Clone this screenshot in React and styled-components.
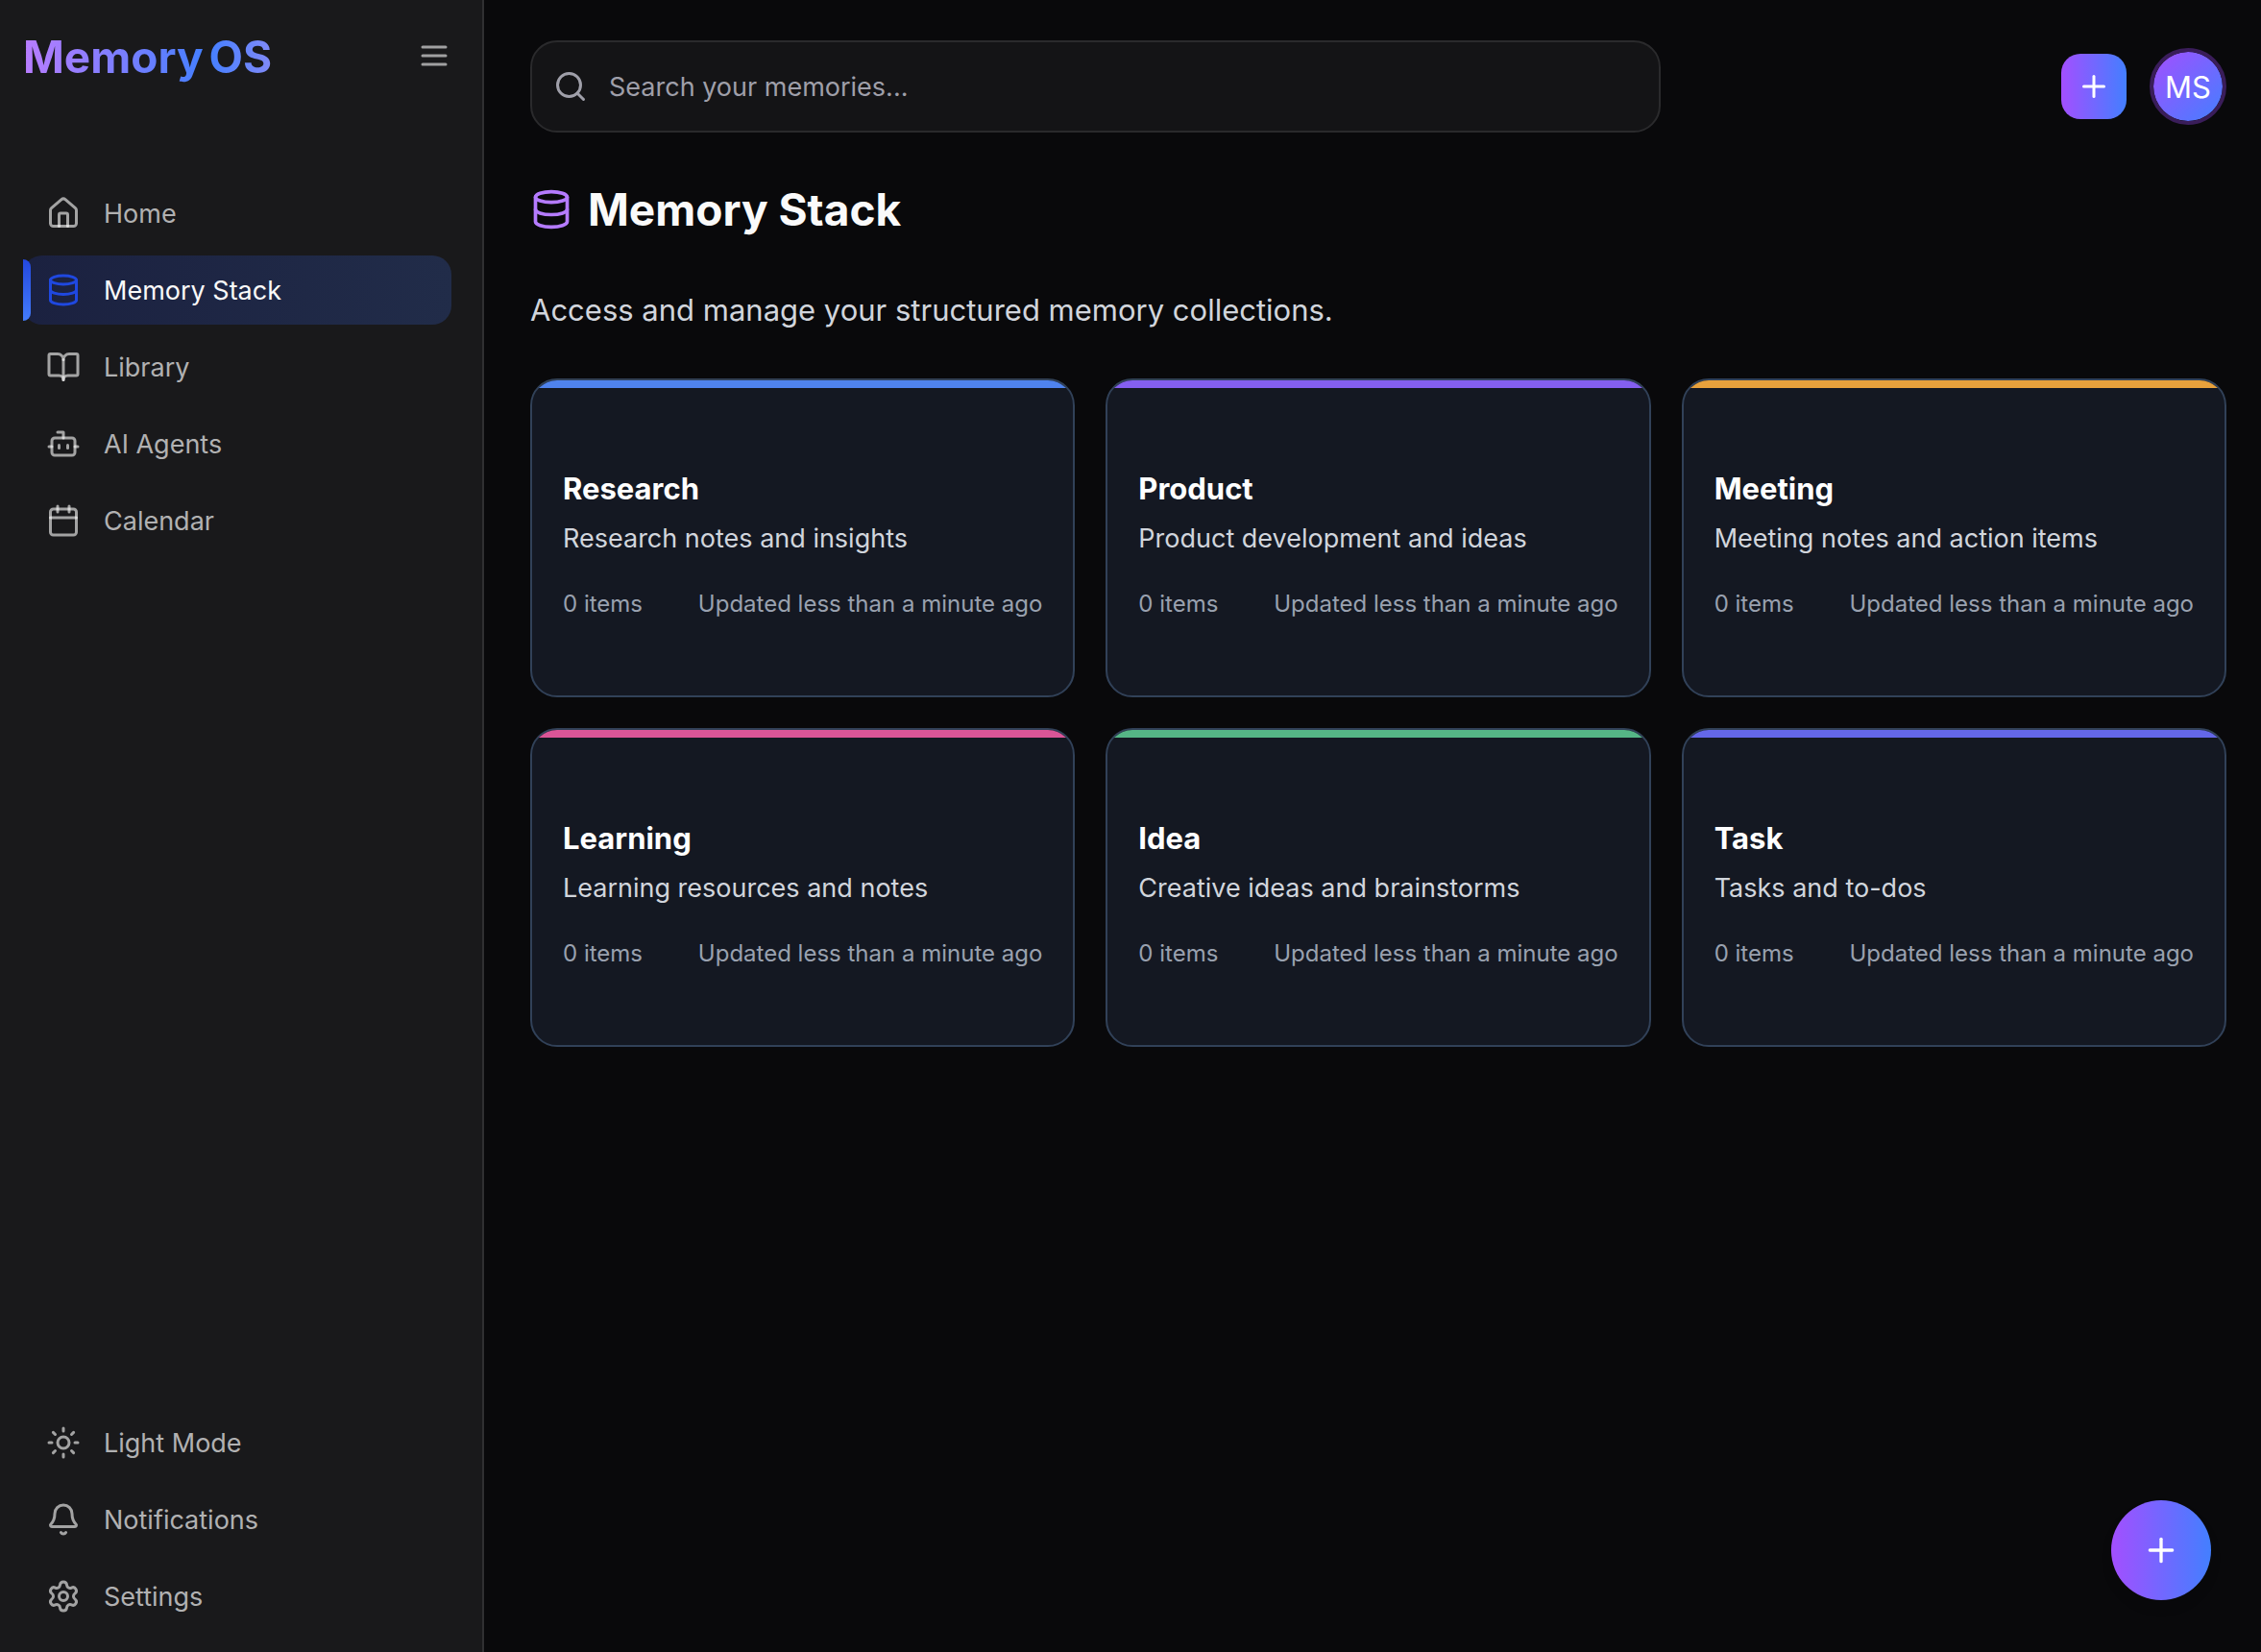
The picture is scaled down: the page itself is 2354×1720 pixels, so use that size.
import React from "react";
import styled, { createGlobalStyle, css } from "styled-components";
import {
  House,
  Database,
  BookOpen,
  Bot,
  Calendar,
  Sun,
  Bell,
  Settings,
  Search,
  Plus,
} from "lucide-react";

const GlobalStyle = createGlobalStyle`
  *, *::before, *::after { box-sizing: border-box; }
  body {
    margin: 0;
    background: #09090b;
    color: #fafafa;
    font-family: Inter, "Noto Sans", "Liberation Sans", sans-serif;
    font-size: 28px;
    -webkit-font-smoothing: antialiased;
  }
  h1, h2, p, ul { margin: 0; padding: 0; }
  button, input { font: inherit; }
`;

const Shell = styled.div`
  display: flex;
  min-height: 100vh;
`;

const Sidebar = styled.aside`
  position: sticky;
  top: 0;
  flex: 0 0 504px;
  height: 100vh;
  display: flex;
  flex-direction: column;
  background: #19191b;
  border-right: 2px solid #303032;
`;

const Brand = styled.div`
  display: flex;
  align-items: center;
  justify-content: space-between;
  height: 116px;
  padding: 0 32px 0 24px;
  margin-bottom: 70px;
`;

const Logo = styled.a`
  display: flex;
  gap: 6px;
  padding-top: 2px;
  font-size: 46px;
  line-height: 64px;
  font-weight: 700;
  text-decoration: none;
`;

const LogoWord = styled.span`
  color: transparent;
  background: linear-gradient(to right, ${(p) => p.$from}, ${(p) => p.$to});
  -webkit-background-clip: text;
  background-clip: text;
`;

const PlainButton = styled.button`
  display: flex;
  align-items: center;
  justify-content: center;
  padding: 0;
  border: 0;
  background: none;
  color: #fff;
  cursor: pointer;
`;

const MenuButton = styled(PlainButton)`
  width: 36px;
  height: 36px;
  color: #a0a0a1;
`;

const NavList = styled.ul`
  list-style: none;
  display: flex;
  flex-direction: column;
  gap: 8px;
  padding: 0 32px 0 24px;
`;

const FooterNav = styled.nav`
  margin-top: auto;
  padding-bottom: 22px;
`;

const itemStyles = css`
  position: relative;
  display: flex;
  align-items: center;
  gap: 24px;
  width: 100%;
  height: 72px;
  padding: 0 24px;
  border: 0;
  border-radius: 20px;
  font-size: 27px;
  line-height: 40px;
  text-decoration: none;
  text-align: left;
  cursor: pointer;
  color: ${(p) => (p.$active ? "#fafafa" : "#b1b1b2")};
  background: ${(p) =>
    p.$active ? "linear-gradient(to right, #1b2140, #212c49)" : "none"};

  svg {
    flex: none;
    color: ${(p) => (p.$active ? "#1f48e0" : "rgba(255, 255, 255, 0.6)")};
  }
`;

const NavLink = styled.a`
  ${itemStyles}
`;

const NavButton = styled.button`
  ${itemStyles}
`;

const Label = styled.span`
  padding-top: 2px;
`;

const ActiveMark = styled.span`
  position: absolute;
  left: 0;
  top: 4px;
  bottom: 4px;
  width: 8px;
  border-radius: 0 8px 8px 0;
  background: linear-gradient(to bottom, #2348e0, #437cfb);
`;

const Main = styled.main`
  flex: 1;
  min-width: 0;
  padding: 42px 36px 48px 48px;
`;

const Header = styled.header`
  display: flex;
  align-items: center;
  justify-content: space-between;
  gap: 24px;
`;

const SearchBox = styled.label`
  flex: 0 1 calc(100% * 2 / 3);
  display: flex;
  align-items: center;
  gap: 22px;
  height: 96px;
  padding: 0 22px;
  border: 2px solid #2a2a2c;
  border-radius: 28px;
  background: #141416;
  color: #9f9fa9;
`;

const SearchInput = styled.input`
  flex: 1;
  min-width: 0;
  padding: 2px 0 0;
  border: 0;
  outline: 0;
  background: none;
  color: #fafafa;
  font-size: 27px;
  line-height: 40px;

  &::placeholder {
    color: #9f9fa9;
    opacity: 1;
  }
`;

const HeaderActions = styled.div`
  display: flex;
  align-items: center;
  gap: 24px;
`;

const AddButton = styled(PlainButton)`
  width: 68px;
  height: 68px;
  border-radius: 20px;
  background: linear-gradient(to right, #a34fff, #437fff);
`;

const Avatar = styled(PlainButton)`
  width: 80px;
  height: 80px;
  border: 4px solid #3a1d5a;
  border-radius: 50%;
  background: linear-gradient(to bottom right, #a34fff, #437fff) padding-box;
  font-size: 31px;
`;

const Fab = styled(PlainButton)`
  position: fixed;
  right: 52px;
  bottom: 54px;
  width: 104px;
  height: 104px;
  border-radius: 50%;
  background: linear-gradient(to right, #a34fff, #437fff);
  box-shadow: 0 8px 12px rgba(0, 0, 0, 0.1);
`;

const PageTitle = styled.h1`
  display: flex;
  align-items: center;
  gap: 16px;
  margin-top: 48px;
  font-size: 46px;
  line-height: 64px;
  font-weight: 700;

  svg {
    color: #b57bff;
  }
`;

const PageIntro = styled.p`
  margin-top: 49px;
  font-size: 31px;
  line-height: 48px;
  color: #d1d5dc;
`;

const CardGrid = styled.ul`
  list-style: none;
  display: grid;
  grid-template-columns: repeat(3, minmax(0, 1fr));
  gap: 32px;
  margin-top: 47px;
`;

const Card = styled.li`
  overflow: hidden;
  border: 2px solid #314158;
  border-radius: 28px;
  background: #141822;
`;

const CardStripe = styled.div`
  height: 8px;
  background: ${(p) => p.$color};
`;

const CardBody = styled.div`
  padding: 81px 32px 79px;
`;

const CardTitle = styled.h2`
  font-size: 31px;
  line-height: 48px;
  font-weight: 700;
  color: #fff;
`;

const CardText = styled.p`
  margin-top: 8px;
  font-size: 27px;
  line-height: 40px;
  color: #d1d5dc;
`;

const CardMeta = styled.div`
  display: flex;
  justify-content: space-between;
  margin-top: 32px;
  font-size: 24px;
  line-height: 32px;
  color: #99a1af;
`;

function MenuIcon() {
  return (
    <svg
      width="36"
      height="36"
      viewBox="0 0 24 24"
      fill="none"
      stroke="currentColor"
      strokeWidth="2"
      strokeLinecap="round"
      aria-hidden="true"
    >
      <path d="M4 6h16M4 12h16M4 18h16" />
    </svg>
  );
}

const pages = [
  { label: "Home", icon: House },
  { label: "Memory Stack", icon: Database, active: true },
  { label: "Library", icon: BookOpen },
  { label: "AI Agents", icon: Bot },
  { label: "Calendar", icon: Calendar },
];

const tools = [
  { label: "Light Mode", icon: Sun },
  { label: "Notifications", icon: Bell },
  { label: "Settings", icon: Settings },
];

const stacks = [
  { title: "Research", text: "Research notes and insights", color: "#4f83ee" },
  { title: "Product", text: "Product development and ideas", color: "#845ff0" },
  { title: "Meeting", text: "Meeting notes and action items", color: "#e8a13c" },
  { title: "Learning", text: "Learning resources and notes", color: "#da5597" },
  { title: "Idea", text: "Creative ideas and brainstorms", color: "#55b586" },
  { title: "Task", text: "Tasks and to-dos", color: "#6467e8" },
];

export default function App() {
  return (
    <>
      <GlobalStyle />
      <Shell>
        <Sidebar>
          <Brand>
            <Logo href="#">
              <LogoWord $from="#b97dff" $to="#457fff">Memory</LogoWord>
              <LogoWord $from="#457fff" $to="#818af8">OS</LogoWord>
            </Logo>
            <MenuButton type="button" aria-label="Toggle sidebar">
              <MenuIcon />
            </MenuButton>
          </Brand>
          <nav>
            <NavList>
              {pages.map(({ label, icon: Icon, active }) => (
                <li key={label}>
                  <NavLink href="#" $active={active}>
                    {active && <ActiveMark />}
                    <Icon size={36} />
                    <Label>{label}</Label>
                  </NavLink>
                </li>
              ))}
            </NavList>
          </nav>
          <FooterNav>
            <NavList>
              {tools.map(({ label, icon: Icon }) => (
                <li key={label}>
                  <NavButton type="button">
                    <Icon size={36} />
                    <Label>{label}</Label>
                  </NavButton>
                </li>
              ))}
            </NavList>
          </FooterNav>
        </Sidebar>
        <Main>
          <Header>
            <SearchBox>
              <Search size={36} />
              <SearchInput
                type="search"
                placeholder="Search your memories..."
                aria-label="Search your memories"
              />
            </SearchBox>
            <HeaderActions>
              <AddButton type="button" aria-label="Add memory">
                <Plus size={36} />
              </AddButton>
              <Avatar type="button">MS</Avatar>
            </HeaderActions>
          </Header>
          <PageTitle>
            <Database size={44} />
            Memory Stack
          </PageTitle>
          <PageIntro>Access and manage your structured memory collections.</PageIntro>
          <CardGrid>
            {stacks.map(({ title, text, color }) => (
              <Card key={title}>
                <CardStripe $color={color} />
                <CardBody>
                  <CardTitle>{title}</CardTitle>
                  <CardText>{text}</CardText>
                  <CardMeta>
                    <span>0 items</span>
                    <span>Updated less than a minute ago</span>
                  </CardMeta>
                </CardBody>
              </Card>
            ))}
          </CardGrid>
        </Main>
        <Fab type="button" aria-label="New memory">
          <Plus size={40} />
        </Fab>
      </Shell>
    </>
  );
}
